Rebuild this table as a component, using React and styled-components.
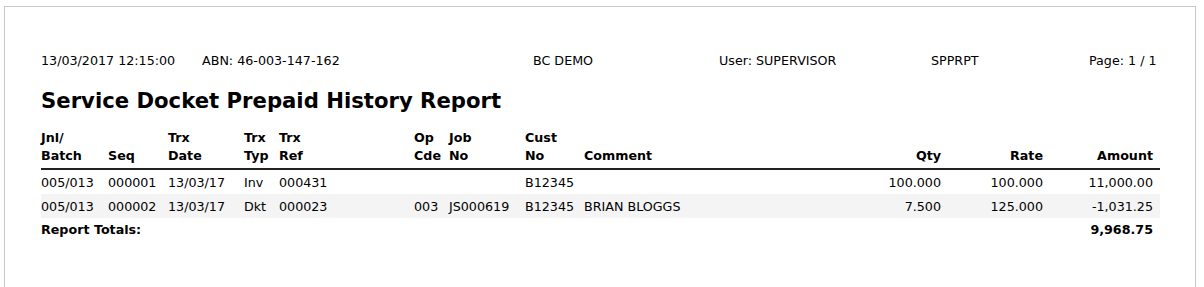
import React from "react";
import styled, { createGlobalStyle } from "styled-components";

// STYLES

const GlobalStyle = createGlobalStyle`
    body {
        margin: 0;
        background: #ffffff;
        font-family: "DejaVu Sans", Verdana, sans-serif;
        color: #000;
        overflow: hidden;
    }
`;

const Page = styled.div`
    margin: 6px 0 0 4px;
    width: 1192px;
    height: 281px;
    border: 1px solid #c9c9c9;
    border-bottom: none;
    padding: 0 0 0 36px;
    box-sizing: border-box;
`;

const InfoLine = styled.div`
    display: grid;
    grid-template-columns: 161px 331px 186px 212px 158px 71px;
    padding-top: 45px;
    height: 18px;
    line-height: 18px;
    font-size: 12.7px;
    white-space: nowrap;
`;

const Title = styled.h1`
    margin: 17px 0 0;
    font-size: 21.2px;
    font-weight: 700;
    line-height: 28px;
    letter-spacing: 0;
`;

const COLS = "67px 60px 76px 35px 135px 35px 76px 59px 257px 100px 102px 110px";

const Row = styled.div`
    display: grid;
    grid-template-columns: ${COLS};
    width: 1119px;
    padding-right: 7px;
    box-sizing: border-box;
    font-size: 12.7px;
    white-space: nowrap;
    background: ${({ $shade }) => ($shade ? "#f4f4f4" : "transparent")};
    height: ${({ $h }) => $h || 24}px;
    align-items: center;
`;

const HeadRow = styled(Row)`
    height: 41px;
    align-items: end;
    font-weight: 700;
    line-height: 18px;
    padding-bottom: 3px;
    border-bottom: 2px solid #222;
    margin-top: 14px;
`;

const Cell = styled.div`
    text-align: ${({ $right }) => ($right ? "right" : "left")};
    font-weight: ${({ $bold }) => ($bold ? 700 : "inherit")};
`;

const TotalLabel = styled.div`
    grid-column: 1 / 10;
    font-weight: 700;
`;

// DATA

const rows = [
    ["005/013", "000001", "13/03/17", "Inv", "000431", "", "", "B12345", "", "100.000", "100.000", "11,000.00"],
    ["005/013", "000002", "13/03/17", "Dkt", "000023", "003", "JS000619", "B12345", "BRIAN BLOGGS", "7.500", "125.000", "-1,031.25"],
];

const headers = [
    ["Jnl/", "Batch"], ["", "Seq"], ["Trx", "Date"], ["Trx", "Typ"], ["Trx", "Ref"],
    ["Op", "Cde"], ["Job", "No"], ["Cust", "No"], ["", "Comment"],
    ["", "Qty"], ["", "Rate"], ["", "Amount"],
];

const isNum = (i) => i >= 9;

// HTML
const App = () => {
    return (
        <>
            <GlobalStyle />
            <Page>
                <InfoLine>
                    <span>13/03/2017 12:15:00</span>
                    <span>ABN: 46-003-147-162</span>
                    <span>BC DEMO</span>
                    <span>User: SUPERVISOR</span>
                    <span>SPPRPT</span>
                    <span>Page: 1 / 1</span>
                </InfoLine>
                <Title>Service Docket Prepaid History Report</Title>
                <HeadRow>
                    {headers.map(([a, b], i) => (
                        <Cell key={i} $right={isNum(i)}>
                            {a}
                            {a && <br />}
                            {b}
                        </Cell>
                    ))}
                </HeadRow>
                {rows.map((r, ri) => (
                    <Row key={ri} $shade={ri % 2 === 1}>
                        {r.map((v, i) => (
                            <Cell key={i} $right={isNum(i)}>{v}</Cell>
                        ))}
                    </Row>
                ))}
                <Row $h={22}>
                    <TotalLabel>Report Totals:</TotalLabel>
                    <Cell />
                    <Cell />
                    <Cell $right $bold>9,968.75</Cell>
                </Row>
            </Page>
        </>
    );
};

export default App;
